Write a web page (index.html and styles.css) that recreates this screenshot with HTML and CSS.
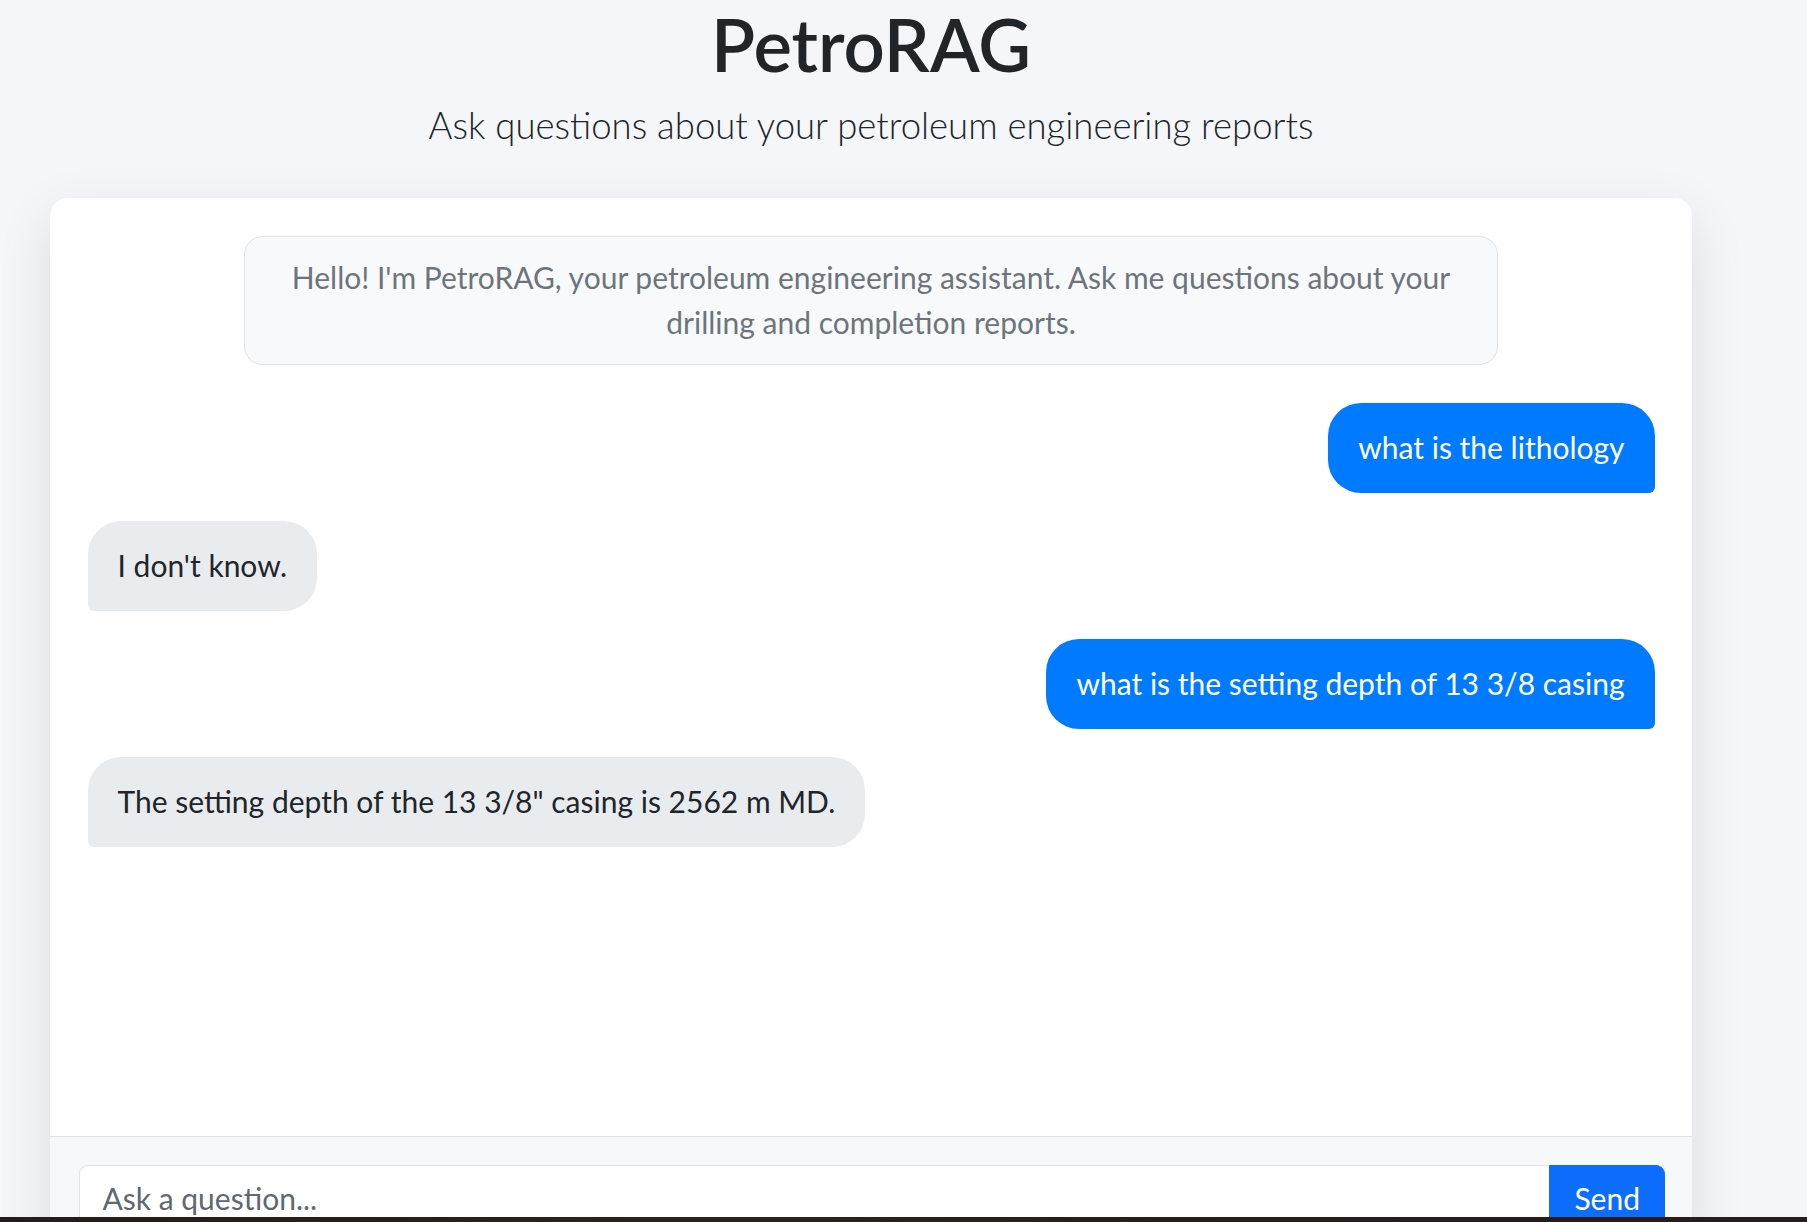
FILE: index.html
```html
<!DOCTYPE html>
<html lang="en">
<head>
<meta charset="utf-8">
<title>PetroRAG</title>
<link rel="stylesheet" href="styles.css">
</head>
<body>
<div class="page">
  <header class="header">
    <h1 class="title">PetroRAG</h1>
    <p class="subtitle">Ask questions about your petroleum engineering reports</p>
  </header>
  <div class="card">
    <div class="chat-body">
      <div class="msg msg-system">Hello! I'm PetroRAG, your petroleum engineering assistant. Ask me questions about your drilling and completion reports.</div>
      <div class="msg msg-user">what is the lithology</div>
      <div class="msg msg-bot">I don't know.</div>
      <div class="msg msg-user">what is the setting depth of 13 3/8 casing</div>
      <div class="msg msg-bot">The setting depth of the 13 3/8" casing is 2562 m MD.</div>
    </div>
    <div class="chat-footer">
      <div class="input-group">
        <input class="chat-input" type="text" placeholder="Ask a question...">
        <button class="send-btn" type="button">Send</button>
      </div>
    </div>
  </div>
</div>
<div class="screen-edge"></div>
</body>
</html>
```
FILE: styles.css
```css
html {
  overflow: hidden;
}

body {
  margin: 0;
  background: #f4f6f9;
  font-family: "Lato", "Open Sans", sans-serif;
  font-size: 30px;
  line-height: 1.5;
  color: #212529;
}

.page {
  width: 1642px;
  margin-left: 50px;
}

.header {
  text-align: center;
  margin-bottom: 45px;
}

.title {
  margin: 0;
  font-size: 72.5px;
  font-weight: 600;
  line-height: 88px;
  color: #212529;
}

.subtitle {
  margin: 10px 0 0;
  font-size: 36.5px;
  font-weight: 300;
  line-height: 55px;
  color: #212529;
}

.card {
  background: #ffffff;
  border-radius: 18px;
  box-shadow: 0 18px 56px rgba(0, 0, 0, 0.1);
  overflow: hidden;
}

.chat-body {
  box-sizing: border-box;
  height: 938px;
  padding: 37.5px;
  display: flex;
  flex-direction: column;
  align-items: flex-start;
  overflow: hidden;
}

.msg {
  box-sizing: border-box;
  margin-bottom: 28px;
  max-width: 75%;
}

.msg-system {
  align-self: center;
  max-width: 80%;
  width: 80%;
  padding: 18.75px 37.5px;
  margin-bottom: 37.5px;
  background: #f8f9fa;
  border: 1px solid #dee2e6;
  border-radius: 18.75px;
  color: #6c757d;
  text-align: center;
}

.msg-user {
  align-self: flex-end;
  padding: 22.5px 30px;
  background: #007bff;
  color: #ffffff;
  border-radius: 33px 33px 6px 33px;
}

.msg-bot {
  align-self: flex-start;
  padding: 22.5px 30px;
  background: #e9ecef;
  color: #212529;
  border-radius: 33px 33px 33px 6px;
}

.chat-footer {
  border-top: 1px solid #dee2e6;
  background: #f7f8fa;
  padding: 28px 27px 28px 29px;
}

.input-group {
  display: flex;
}

.chat-input {
  flex: 1;
  min-width: 0;
  font-family: inherit;
  font-size: 30px;
  line-height: 45px;
  padding: 10px 22.5px;
  color: #212529;
  background: #ffffff;
  border: 1px solid #dee2e6;
  border-right: none;
  border-radius: 9px 0 0 9px;
  outline: none;
}

.chat-input::placeholder {
  color: #5f6770;
}

.send-btn {
  font-family: inherit;
  font-size: 30px;
  line-height: 45px;
  padding: 10px 24px;
  color: #ffffff;
  background: #0d6efd;
  border: 1px solid #0d6efd;
  border-radius: 0 9px 9px 0;
  cursor: pointer;
}

.screen-edge {
  position: fixed;
  left: 0;
  right: 0;
  bottom: 0;
  height: 5px;
  background: linear-gradient(90deg, #2a1a17, #2d2219 40%, #2a1d18 70%, #2b1a1a);
}
```
